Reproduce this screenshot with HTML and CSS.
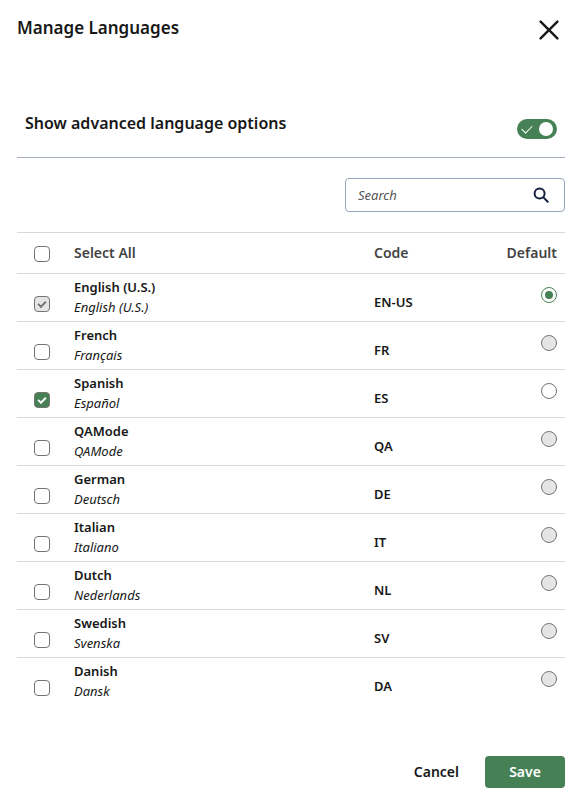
FILE: index.html
```html
<!DOCTYPE html>
<html lang="en">
<head>
    <title>Manage Languages</title>
    <meta charset="UTF-8">
    <meta name="viewport" content="width=device-width, initial-scale=1.0">
    <link rel="stylesheet" href="styles.css">
</head>
<body>
<div class="modal">
    <header class="header">
        <h1>Manage Languages</h1>
        <button class="close" type="button" aria-label="Close">
            <svg width="20" height="20" viewBox="0 0 20 20">
                <path d="M1.6 1.6L18.4 18.4M18.4 1.6L1.6 18.4" fill="none" stroke="#181818" stroke-width="2.4" stroke-linecap="round"/>
            </svg>
        </button>
    </header>

    <div class="advanced">
        <label for="advanced">Show advanced language options</label>
        <input type="checkbox" id="advanced" class="toggle" checked>
    </div>

    <div class="search">
        <input type="text" placeholder="Search" aria-label="Search">
        <svg width="16" height="16" viewBox="0 0 16 16">
            <circle cx="6.6" cy="6.6" r="5" fill="none" stroke="#16213f" stroke-width="2"/>
            <path d="M10.4 10.4L14.7 14.7" stroke="#16213f" stroke-width="2" stroke-linecap="round"/>
        </svg>
    </div>

    <table>
        <thead>
            <tr>
                <th class="check"><input type="checkbox" id="all"></th>
                <th class="name"><label for="all">Select All</label></th>
                <th class="code">Code</th>
                <th class="default">Default</th>
            </tr>
        </thead>
        <tbody>
            <tr>
                <td class="check"><input type="checkbox" id="en" checked disabled></td>
                <td class="name"><label for="en">English (U.S.) <i>English (U.S.)</i></label></td>
                <td class="code">EN-US</td>
                <td class="default"><input type="radio" name="default" aria-label="English (U.S.) default" checked></td>
            </tr>
            <tr>
                <td class="check"><input type="checkbox" id="fr"></td>
                <td class="name"><label for="fr">French <i>Français</i></label></td>
                <td class="code">FR</td>
                <td class="default"><input type="radio" name="default" aria-label="French default" disabled></td>
            </tr>
            <tr>
                <td class="check"><input type="checkbox" id="es" checked></td>
                <td class="name"><label for="es">Spanish <i>Español</i></label></td>
                <td class="code">ES</td>
                <td class="default"><input type="radio" name="default" aria-label="Spanish default"></td>
            </tr>
            <tr>
                <td class="check"><input type="checkbox" id="qa"></td>
                <td class="name"><label for="qa">QAMode <i>QAMode</i></label></td>
                <td class="code">QA</td>
                <td class="default"><input type="radio" name="default" aria-label="QAMode default" disabled></td>
            </tr>
            <tr>
                <td class="check"><input type="checkbox" id="de"></td>
                <td class="name"><label for="de">German <i>Deutsch</i></label></td>
                <td class="code">DE</td>
                <td class="default"><input type="radio" name="default" aria-label="German default" disabled></td>
            </tr>
            <tr>
                <td class="check"><input type="checkbox" id="it"></td>
                <td class="name"><label for="it">Italian <i>Italiano</i></label></td>
                <td class="code">IT</td>
                <td class="default"><input type="radio" name="default" aria-label="Italian default" disabled></td>
            </tr>
            <tr>
                <td class="check"><input type="checkbox" id="nl"></td>
                <td class="name"><label for="nl">Dutch <i>Nederlands</i></label></td>
                <td class="code">NL</td>
                <td class="default"><input type="radio" name="default" aria-label="Dutch default" disabled></td>
            </tr>
            <tr>
                <td class="check"><input type="checkbox" id="sv"></td>
                <td class="name"><label for="sv">Swedish <i>Svenska</i></label></td>
                <td class="code">SV</td>
                <td class="default"><input type="radio" name="default" aria-label="Swedish default" disabled></td>
            </tr>
            <tr>
                <td class="check"><input type="checkbox" id="da"></td>
                <td class="name"><label for="da">Danish <i>Dansk</i></label></td>
                <td class="code">DA</td>
                <td class="default"><input type="radio" name="default" aria-label="Danish default" disabled></td>
            </tr>
        </tbody>
    </table>

    <footer class="footer">
        <button type="button" class="cancel">Cancel</button>
        <button type="button" class="save">Save</button>
    </footer>
</div>
</body>
</html>
```
FILE: styles.css
```css
*, *::before, *::after {
    box-sizing: border-box;
}
body {
    margin: 0;
    background-color: #fff;
    color: #181818;
    font-family: "Noto Sans", sans-serif;
    font-size: 13px;
    line-height: 20px;
}
.modal {
    padding: 16px 14px 16px 17px;
}
button {
    border: 0;
    background: none;
    color: inherit;
    font: inherit;
    cursor: pointer;
}

.header {
    display: flex;
    align-items: flex-start;
    justify-content: space-between;
}
h1 {
    margin: 0;
    font-size: 17px;
    font-weight: 600;
    line-height: 24px;
}
.close {
    padding: 4px 6px;
}
.close svg {
    display: block;
}

.advanced {
    display: flex;
    align-items: flex-start;
    justify-content: space-between;
    margin-top: 67px;
    padding: 0 8px 18px;
    border-bottom: 1px solid #a5afc2;
}
.advanced label {
    font-size: 16px;
    font-weight: 600;
    line-height: 24px;
}

.search {
    display: flex;
    align-items: center;
    width: 220px;
    height: 34px;
    margin: 20px 0 20px auto;
    padding: 0 15px 0 12px;
    border: 1px solid #98a6bf;
    border-radius: 4px;
}
.search input {
    flex: 1;
    min-width: 0;
    padding: 0;
    border: 0;
    outline: 0;
    background: none;
    font: inherit;
}
.search input::placeholder {
    color: #555;
    font-style: italic;
}

table {
    width: 100%;
    border-collapse: separate;
    border-spacing: 0;
    table-layout: fixed;
}
th, td {
    padding: 0;
    border-top: 1px solid #d8d8d8;
    text-align: left;
    font-weight: 600;
}
th {
    height: 41px;
    color: #444;
    font-size: 14px;
}
td {
    height: 48px;
    padding-top: 3px;
    vertical-align: top;
}
.check {
    width: 57px;
    padding-left: 17px;
}
.code {
    width: 120px;
}
td.code {
    padding-top: 18px;
}
.default {
    width: 71px;
    padding-right: 8px;
    text-align: right;
}
th.check {
    padding-top: 2px;
}
td.check {
    padding-top: 22px;
}
td.default {
    padding-top: 13px;
}
.name i {
    display: block;
    font-weight: 400;
}

input[type=checkbox], input[type=radio] {
    display: block;
    position: relative;
    appearance: none;
    width: 16px;
    height: 16px;
    margin: 0;
    border: 1px solid #747474;
    border-radius: 4px;
    background-color: #fff;
}
input[type=radio] {
    margin-left: auto;
    border-radius: 50%;
}
input[type=checkbox]:checked {
    background-color: #458154;
}
input[type=checkbox]:checked::after {
    content: "";
    position: absolute;
    left: 3px;
    top: 4px;
    width: 8px;
    height: 5px;
    border: solid #fff;
    border-width: 0 0 2px 2px;
    transform: rotate(-45deg);
}
input[type=checkbox]:disabled, input[type=radio]:disabled {
    background-color: #e5e5e5;
}
input[type=checkbox]:disabled::after {
    border-color: #747474;
}
input[type=radio]:checked {
    border-color: #458154;
}
input[type=radio]:checked::after {
    content: "";
    position: absolute;
    inset: 3px;
    border-radius: 50%;
    background-color: #458154;
}

input.toggle[type=checkbox] {
    width: 40px;
    height: 20px;
    margin-top: 8px;
    border: 0;
    border-radius: 10px;
}
.toggle::before {
    content: "";
    position: absolute;
    top: 3px;
    right: 4px;
    width: 14px;
    height: 14px;
    border-radius: 50%;
    background-color: #fff;
}
input.toggle[type=checkbox]:checked::after {
    left: 5px;
    top: 6px;
    width: 10px;
    height: 6px;
    border-width: 0 0 1px 1px;
}

.footer {
    display: flex;
    justify-content: flex-end;
    gap: 8px;
    margin-top: 51px;
    font-weight: 600;
}
.footer button {
    height: 32px;
    padding: 0 18px;
    font-size: 14px;
}
.footer .save {
    width: 80px;
    border-radius: 4px;
    background-color: #458154;
    color: #fff;
}
```
